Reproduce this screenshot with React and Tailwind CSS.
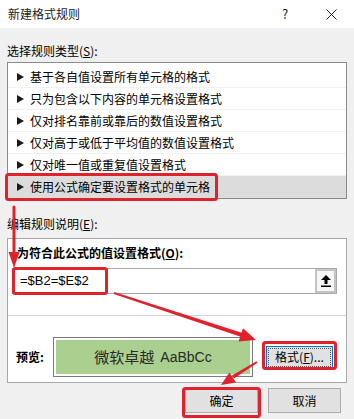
import React from 'react'

const rules = [
  '基于各自值设置所有单元格的格式',
  '只为包含以下内容的单元格设置格式',
  '仅对排名靠前或靠后的数值设置格式',
  '仅对高于或低于平均值的数值设置格式',
  '仅对唯一值或重复值设置格式',
  '使用公式确定要设置格式的单元格',
]

function Arrow() {
  return (
    <svg width="7" height="8" viewBox="0 0 7 8" className="shrink-0">
      <polygon points="0,0 7,4 0,8" fill="#1a1a1a" />
    </svg>
  )
}

// red callouts drawn over the dialog
function Annotations() {
  const red = '#e0222c'
  return (
    <svg className="absolute inset-0 pointer-events-none" width="354" height="419" viewBox="0 0 354 419">
      <g fill="none" stroke={red} strokeWidth="3">
        <rect x="6.5" y="174.5" width="210" height="25" rx="2" />
        <rect x="13.5" y="268.5" width="93" height="25" rx="2" />
        <rect x="263.5" y="342.5" width="72" height="26" rx="2" />
        <rect x="183.5" y="388.5" width="76" height="28" rx="2" />
      </g>
      <line x1="14" y1="207" x2="14" y2="254" stroke={red} strokeWidth="3" strokeLinecap="round" />
      <g fill={red}>
        <polygon points="114.3,292.1 242.6,333.1 241.4,336.9 113.7,293.9" />
        <polygon points="256.5,361.2 232,375.5 234,378.5 257.5,362.8" />
        <polygon points="8.5,252 19.5,252 14,268" />
        <polygon points="256,340 238.6,341.5 243,328.3" />
        <polygon points="221,385 229.4,372.4 236,382.4" />
      </g>
    </svg>
  )
}

export default function App() {
  return (
    <div className="relative w-[354px] h-[419px] overflow-hidden bg-[#f0f0f0] text-[12px] leading-[16px] text-black font-['Noto_Sans_CJK_SC',sans-serif]">
      {/* title bar */}
      <div className="flex h-[28px] items-center bg-white">
        <span className="pl-[8px] text-[#1a1a1a]">新建格式规则</span>
        <div className="ml-auto flex h-full">
          <div className="flex w-[46px] items-center justify-center text-[13px] text-[#222]">?</div>
          <div className="flex w-[46px] items-center justify-center">
            <svg width="11" height="11" viewBox="0 0 11 11">
              <path d="M0.5 0.5 L10.5 10.5 M10.5 0.5 L0.5 10.5" stroke="#222" strokeWidth="1" />
            </svg>
          </div>
        </div>
      </div>

      <div className="px-[7px]">
        <div className="mt-[15px]">
          选择规则类型(<span className="underline">S</span>):
        </div>

        <div className="mt-[3px] w-[340px] border border-[#8a8a8a] bg-white pt-[3px]">
          {rules.map((r, i) => (
            <div
              key={r}
              className={`flex h-[22px] items-center gap-[6px] pl-[9px] ${
                i === rules.length - 1 ? 'bg-[#dcdcdc]' : 'border-b border-[#f2f2f2]'
              }`}
            >
              <Arrow />
              <span>{r}</span>
            </div>
          ))}
        </div>

        <div className="mt-[17px]">
          编辑规则说明(<span className="underline">E</span>):
        </div>

        <div className="mt-[6px] w-[340px] border border-[#a8a8a8] bg-white">
          <div className="pl-[9px] pt-[6px] font-bold">
            为符合此公式的值设置格式(<span className="underline">O</span>):
          </div>
          <div className="ml-[4px] mt-[7px] flex h-[26px] w-[325px] items-stretch border border-[#a8a8a8] bg-white">
            <div className="flex flex-1 items-center pl-[7px] text-[13px] font-['Liberation_Sans',sans-serif]">
              =$B2=$E$2
            </div>
            <div className="flex w-[21px] items-center justify-center border-2 border-[#c4c4c4] bg-[#f6f6f6]">
              <svg width="10" height="12" viewBox="0 0 10 12">
                <polygon points="5,0 10,5 6.5,5 6.5,9 3.5,9 3.5,5 0,5" fill="#000" />
                <rect x="0" y="10.5" width="10" height="1.5" fill="#000" />
              </svg>
            </div>
          </div>

          <div className="mt-[21px] h-px bg-[#d4d4d4]" />

          <div className="mt-[21px] flex items-center pb-[5px]">
            <span className="w-[45px] pl-[8px] font-bold">预览:</span>
            <div className="h-[40px] w-[200px] border border-[#7a7a7a] bg-white p-[2px]">
              <div className="flex h-full items-center justify-center gap-[6px] bg-[#a9d08e] text-[15px] text-[#2a2a2a]">
                <span>微软卓越</span>
                <span className="font-['Liberation_Sans',sans-serif] text-[14px]">AaBbCc</span>
              </div>
            </div>
            <div className="ml-[13px] flex h-[23px] w-[67px] items-center justify-center border border-[#0078d7] bg-[#e1e1e1]">
              <div className="flex h-[19px] w-[63px] items-center justify-center border border-dotted border-[#555]">
                格式(<span className="underline">F</span>)...
              </div>
            </div>
          </div>
        </div>

        <div className="mt-[5px] flex justify-end gap-[10px] pr-[6px]">
          <button className="flex h-[25px] w-[73px] items-center justify-center border border-[#adadad] bg-[#e1e1e1]">
            确定
          </button>
          <button className="flex h-[25px] w-[73px] items-center justify-center border border-[#adadad] bg-[#e1e1e1]">
            取消
          </button>
        </div>
      </div>

      <Annotations />
    </div>
  )
}
